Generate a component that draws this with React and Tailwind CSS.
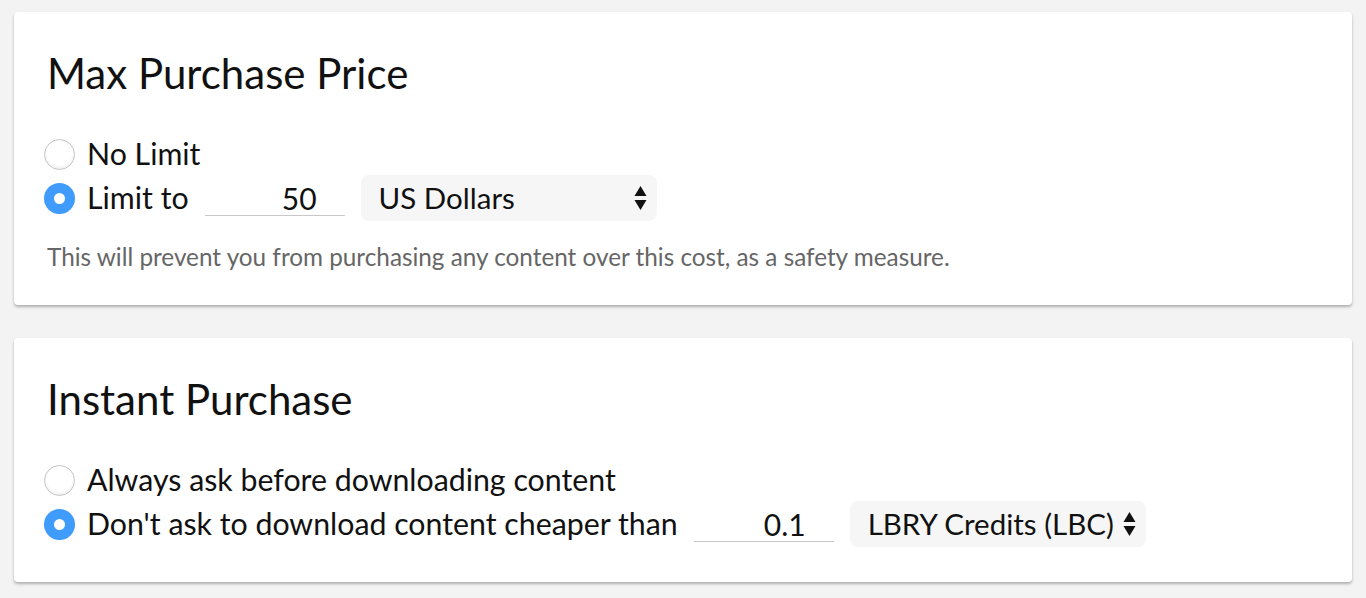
const Radio = ({ checked }) =>
  checked ? (
    <span className="flex h-[31px] w-[31px] shrink-0 items-center justify-center rounded-full bg-[#3f9bfc]">
      <span className="h-[11px] w-[11px] rounded-full bg-white"></span>
    </span>
  ) : (
    <span className="h-[31px] w-[31px] shrink-0 rounded-full border border-[#c4c4c4] bg-white shadow-[inset_0_-2px_3px_rgba(0,0,0,0.06)]"></span>
  );

const Arrows = () => (
  <svg width="13" height="26" viewBox="0 0 13 26" className="shrink-0">
    <path d="M6.5 1 L12.5 11 L0.5 11 Z" fill="#111" />
    <path d="M6.5 25 L12.5 15 L0.5 15 Z" fill="#111" />
  </svg>
);

const AmountInput = ({ value }) => (
  <div className="flex h-[36px] w-[140px] items-end justify-end border-b border-[#c8c8c8] pr-[28px] text-[30px] leading-[34px] text-[#111]">
    {value}
  </div>
);

const Select = ({ label }) => (
  <div className="flex h-[46px] w-[296px] items-center justify-between rounded-[8px] bg-[#f6f6f6] pl-[18px] pr-[10px] text-[29.5px] text-[#111]">
    <span>{label}</span>
    <Arrows />
  </div>
);

const Row = ({ checked, children }) => (
  <div className="-ml-[3px] flex h-[44px] items-center gap-[12px]">
    <Radio checked={checked} />
    {children}
  </div>
);

export default function App() {
  return (
    <div
      className="min-h-screen bg-[#f3f3f3] px-[14px] pt-[12px] text-[#111]"
      style={{ fontFamily: "Lato, 'Open Sans', sans-serif" }}
    >
      {/* Max purchase price */}
      <section className="h-[293px] rounded-[4px] bg-white pl-[33px] pt-[36px] shadow-[0_2px_3px_rgba(0,0,0,0.28)]">
        <h2 className="text-[42px] leading-[50px] font-normal">Max Purchase Price</h2>
        <div className="mt-[34px] flex flex-col">
          <Row>
            <span className="text-[30.3px]">No Limit</span>
          </Row>
          <Row checked>
            <span className="text-[30.3px]">Limit to</span>
            <div className="ml-[4px] flex items-center gap-[16px]">
              <AmountInput value="50" />
              <Select label="US Dollars" />
            </div>
          </Row>
        </div>
        <p className="mt-[22px] text-[24.3px] leading-[30px] text-[#666]">
          This will prevent you from purchasing any content over this cost, as a safety measure.
        </p>
      </section>

      {/* Instant purchase */}
      <section className="mt-[33px] h-[244px] rounded-[4px] bg-white pl-[33px] pt-[36px] shadow-[0_2px_3px_rgba(0,0,0,0.28)]">
        <h2 className="text-[42px] leading-[50px] font-normal">Instant Purchase</h2>
        <div className="mt-[34px] flex flex-col">
          <Row>
            <span className="text-[30.3px]">Always ask before downloading content</span>
          </Row>
          <Row checked>
            <span className="text-[30.3px]">Don't ask to download content cheaper than</span>
            <div className="ml-[4px] flex items-center gap-[16px]">
              <AmountInput value="0.1" />
              <Select label="LBRY Credits (LBC)" />
            </div>
          </Row>
        </div>
      </section>
    </div>
  );
}
